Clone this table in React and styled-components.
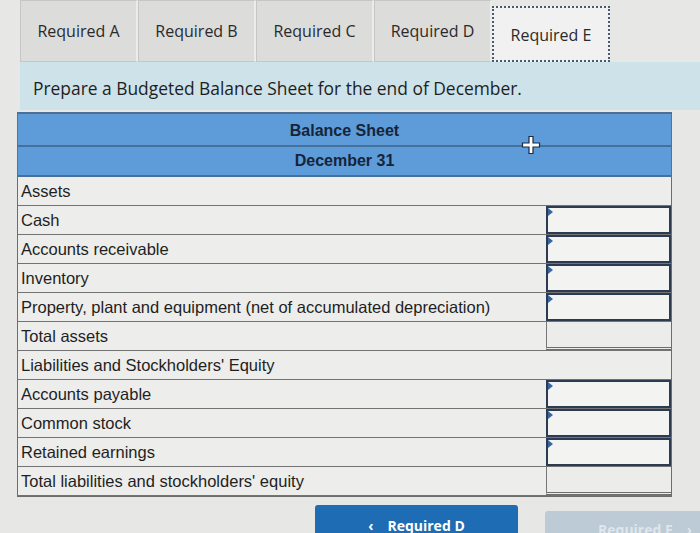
import React from "react";
import styled, { createGlobalStyle } from "styled-components";

const GlobalStyle = createGlobalStyle`
  html, body {
    margin: 0;
    padding: 0;
    background: #e7e7e6;
    overflow: hidden;
  }
`;

const Page = styled.div`
  width: 700px;
  height: 533px;
  overflow: hidden;
  font-family: "Open Sans", "Liberation Sans", sans-serif;
`;

const TabBar = styled.div`
  display: flex;
  padding-left: 20px;
  height: 62px;
  align-items: stretch;
`;

const Tab = styled.div`
  width: 118px;
  box-sizing: border-box;
  display: flex;
  align-items: center;
  justify-content: center;
  font-size: 16px;
  color: #2a2a2a;
  background: ${(p) => (p.$active ? "#f1f1f1" : "#dcdcdb")};
  border: ${(p) => (p.$active ? "2px dotted #4a5b70" : "1px solid #c6c6c4")};
  border-right: ${(p) => (p.$active ? "2px dotted #4a5b70" : "2px solid #ececea")};
  margin-top: ${(p) => (p.$active ? "6px" : "0")};
  padding-top: ${(p) => (p.$active ? "2px" : "0")};
`;

const Banner = styled.div`
  margin-left: 20px;
  height: 48px;
  background: #cde2e9;
  display: flex;
  align-items: center;
  padding-left: 13px;
  padding-top: 3px;
  box-sizing: border-box;
  font-size: 17.4px;
  color: #1e1e1e;
`;

const Table = styled.div`
  margin: 2px 0 0 17px;
  width: 653px;
  font-family: "Liberation Sans", Arial, sans-serif;
  border: 1px solid #6d6d6d;
  border-top: 2px solid #4d6f93;
`;

const HeadRow = styled.div`
  position: relative;
  height: 28px;
  padding-top: ${(p) => (p.$first ? "3px" : "0")};
  background: #5d9bd9;
  border-bottom: 2px solid #46709a;
  display: flex;
  align-items: center;
  justify-content: center;
  font-size: 16px;
  font-weight: bold;
  color: #16243a;
`;

const PlusIcon = styled.svg`
  position: absolute;
  left: 503px;
  top: 21px;
  z-index: 2;
`;

const Row = styled.div`
  display: flex;
  height: 28px;
  background: #ededeb;
  border-bottom: 1px solid #737373;
`;

const Label = styled.div`
  flex: 1;
  display: flex;
  align-items: center;
  padding-left: 3px;
  font-size: 16.5px;
  color: #1f1f1f;
  white-space: nowrap;
`;

const Cell = styled.div`
  position: relative;
  width: 125px;
  box-sizing: border-box;
  background: ${(p) => (p.$input ? "#f3f3f1" : "#ececea")};
  border: ${(p) => (p.$input ? "2px solid #2c3a52" : "none")};
  border-left: ${(p) => (p.$input ? "2px solid #2c3a52" : "1px solid #777")};
  border-bottom: ${(p) => (p.$total ? "3px double #6d6d6d" : p.$input ? "2px solid #2c3a52" : "none")};
`;

const Marker = styled.span`
  position: absolute;
  left: 0;
  top: 0;
  width: 0;
  height: 0;
  border-top: 4px solid transparent;
  border-bottom: 4px solid transparent;
  border-left: 5px solid #3566a3;
`;

const Footer = styled.div`
  display: flex;
  margin-top: 8px;
  padding-left: 315px;
  gap: 27px;
  align-items: flex-start;
`;

const NavButton = styled.div`
  display: flex;
  flex-shrink: 0;
  align-items: center;
  justify-content: center;
  gap: 14px;
  height: ${(p) => (p.$disabled ? "36px" : "40px")};
  margin-top: ${(p) => (p.$disabled ? "6px" : "0")};
  width: ${(p) => (p.$disabled ? "200px" : "203px")};
  background: ${(p) => (p.$disabled ? "#bccbd5" : "#1e6cb3")};
  color: ${(p) => (p.$disabled ? "#dfe6ec" : "#ffffff")};
  border-radius: 3px;
  font-size: 14px;
  font-weight: bold;
`;

const rows = [
  { label: "Assets", kind: "section" },
  { label: "Cash", kind: "input" },
  { label: "Accounts receivable", kind: "input" },
  { label: "Inventory", kind: "input" },
  { label: "Property, plant and equipment (net of  accumulated depreciation)", kind: "input" },
  { label: "Total assets", kind: "total" },
  { label: "Liabilities and Stockholders' Equity", kind: "section" },
  { label: "Accounts payable", kind: "input" },
  { label: "Common stock", kind: "input" },
  { label: "Retained earnings", kind: "input" },
  { label: "Total liabilities and stockholders' equity", kind: "total" },
];

const tabs = ["Required A", "Required B", "Required C", "Required D", "Required E"];

export default function App() {
  return (
    <Page>
      <GlobalStyle />
      <TabBar>
        {tabs.map((t) => (
          <Tab key={t} $active={t === "Required E"}>
            {t}
          </Tab>
        ))}
      </TabBar>
      <Banner>Prepare a Budgeted Balance Sheet for the end of December.</Banner>
      <Table>
        <HeadRow $first>
          Balance Sheet
          <PlusIcon width="20" height="20" viewBox="0 0 20 20">
            <path
              d="M8 1.5h4v6.5h6.5v4H12v6.5H8V12H1.5V8H8z"
              fill="#ffffff"
              stroke="#1c2a40"
              strokeWidth="1.2"
            />
          </PlusIcon>
        </HeadRow>
        <HeadRow>December 31</HeadRow>
        {rows.map((r) => (
          <Row key={r.label}>
            <Label>{r.label}</Label>
            {r.kind === "input" && (
              <Cell $input>
                <Marker />
              </Cell>
            )}
            {r.kind === "total" && <Cell $total />}
          </Row>
        ))}
      </Table>
      <Footer>
        <NavButton>
          <span>&#x2039;</span>
          <span>Required D</span>
        </NavButton>
        <NavButton $disabled>
          <span>Required E</span>
          <span>&#x203A;</span>
        </NavButton>
      </Footer>
    </Page>
  );
}
